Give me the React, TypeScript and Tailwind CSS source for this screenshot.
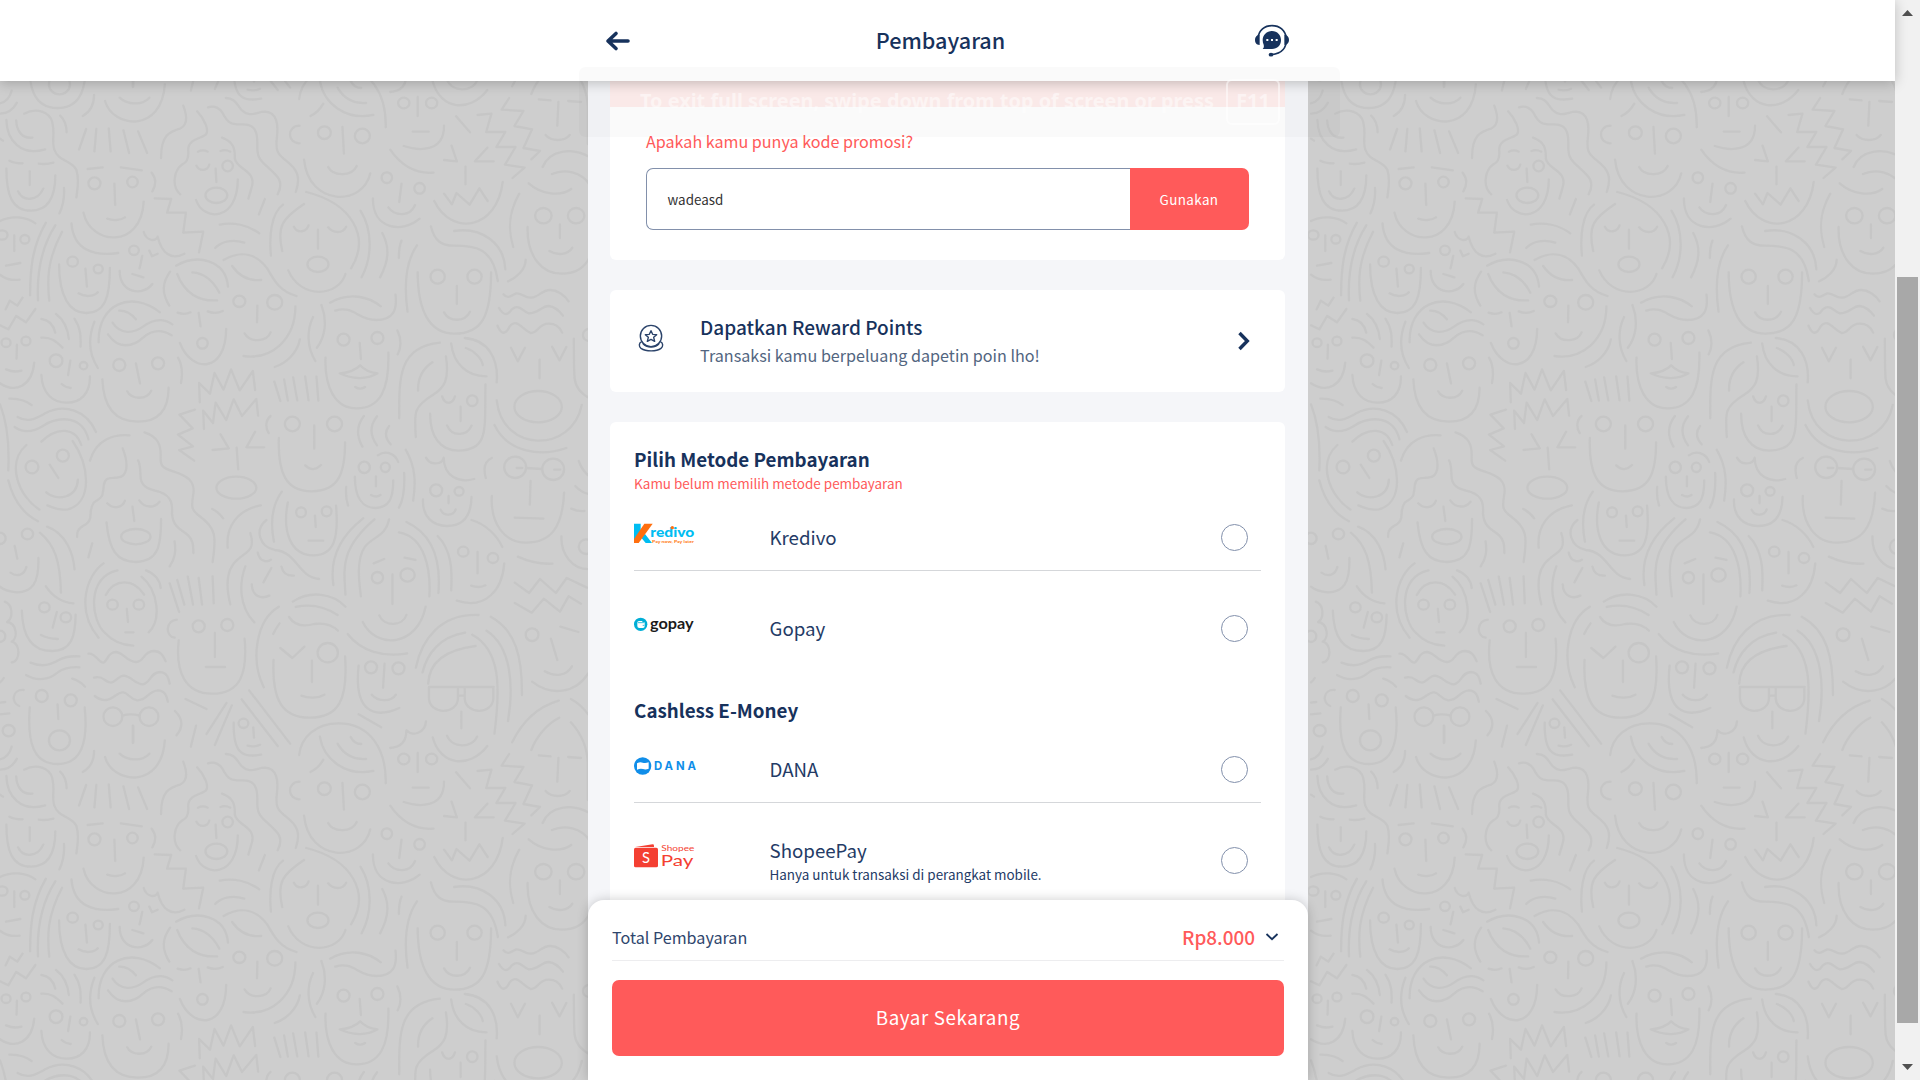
import type { ReactNode } from 'react';

type Oval = [number, number, number, number];

// Face doodles of the wallpaper tile, upper part.
const UPPER_OVALS: Oval[] = [
  [251, 340, 16, 18], [352, 336, 14, 16], [605, 288, 14, 16], [575, 376, 29, 23], [862, 188, 17, 19], [963, 198, 20, 22],
  [1073, 99, 15, 16], [1147, 99, 15, 16], [1028, 323, 14, 16], [1115, 355, 14, 16], [1444, 437, 22, 23], [1531, 437, 22, 23],
  [6, 495, 14, 14], [66, 508, 12, 13], [193, 575, 14, 15], [261, 597, 12, 13], [356, 541, 13, 14], [845, 583, 28, 23],
  [1163, 620, 19, 21], [1261, 620, 19, 21], [1430, 1010, 63, 47], [1565, 795, 16, 18], [16, 818, 12, 13], [69, 813, 12, 13],
  [149, 872, 17, 19], [222, 887, 10, 11], [317, 885, 16, 18], [420, 880, 16, 18], [538, 820, 14, 16], [636, 694, 16, 17],
  [730, 697, 20, 22], [913, 809, 16, 18], [1003, 804, 16, 18], [628, 1253, 53, 33], [777, 1062, 20, 22], [889, 1062, 20, 22],
  [1255, 992, 14, 16], [968, 1192, 15, 17], [1024, 1192, 12, 14], [1159, 1261, 16, 18], [1220, 1264, 12, 13],
  [1369, 1192, 29, 32], [1470, 1198, 29, 32], [1558, 1430, 20, 22], [85, 1191, 17, 19], [167, 1157, 16, 18],
  [361, 1400, 39, 23], [0, 1405, 15, 17], [73, 1392, 15, 16], [800, 1327, 13, 15], [868, 1324, 13, 15],
  [1003, 1523, 15, 17], [1083, 1515, 19, 20], [1231, 1445, 14, 15], [1310, 1464, 14, 15],
];

const UPPER_STROKES = [
  'M0 131C20 131 36 117 45 98M0 100C15 95 27 80 31 62M64 131C90 115 120 120 135 145C150 180 135 215 145 240C155 275 190 270 203 300C212 330 205 360 203 382',
  'M17 150C18 210 55 260 120 238M43 151C44 185 60 206 86 203M160 137C172 150 177 165 177 187M250 75C250 105 240 125 220 138M25 272C35 278 45 280 60 280M103 281C118 283 130 282 142 278M0 206L8 212',
  'M17 296C17 370 30 422 82 422C130 422 147 380 147 316M79 304V345M48 364C60 395 100 395 115 356M170 354C172 385 167 408 158 430',
  'M229 177L210 239M256 177L251 244M289 175L294 244M328 181L343 249M367 184L391 249M279 93C300 175 430 190 438 43M318 83C340 107 380 105 397 83M354 0V50',
  'M233 297L273 292M321 292L377 301M304 341L306 405M285 446C300 452 320 452 332 442M222 428C240 525 375 540 382 395M403 308C415 325 415 345 405 364',
  'M487 107C500 145 497 165 480 175C450 185 428 195 428 264M524 124C545 150 555 180 548 192C540 205 500 205 500 240C502 260 500 275 485 283C462 300 455 350 479 373',
  'M553 112C570 105 585 115 592 130C605 160 615 165 645 163C675 163 684 180 684 220C682 260 690 270 710 290C740 320 755 335 738 373',
  'M600 84C625 84 630 105 642 120C665 145 680 125 705 125C735 128 740 160 736 200C732 240 735 250 760 272C790 298 800 320 786 366',
  'M590 203C620 215 625 235 624 265C628 300 685 300 668 355L660 386M526 245C535 240 545 241 552 245M586 243C595 239 605 241 612 245M522 287C530 305 552 303 556 284M573 296L575 336M521 390C540 455 632 455 632 328M704 387L688 433',
  'M411 385L455 387L444 428H494L487 488L540 485L529 547M859 101C850 120 840 130 825 138M796 167C762 167 762 220 796 220M910 171L914 251M872 291C885 320 935 320 948 288M808 269C820 410 965 410 984 310',
  'M1110 81V138M1097 185H1139M1073 228C1110 242 1180 250 1180 167M1037 239C1065 285 1100 312 1152 308M1212 139L1249 187M1067 341L1061 396M1032 412C1050 440 1090 440 1103 405M991 385C990 480 1070 490 1115 446',
  'M1200 227L1214 274L1180 270M1295 233L1262 274H1312M1237 290V343M1180 371L1201 403L1213 369L1248 404L1274 355L1296 393M1154 393C1200 500 1320 480 1336 336',
  'M1269 135L1306 131L1292 186H1343L1319 231H1370L1342 284L1394 293L1362 324M1353 84L1333 119L1391 123L1367 168L1414 178L1391 234L1435 243L1412 268',
  'M1432 88L1463 91M1510 93L1544 96M1484 96L1481 167M1450 195C1465 215 1500 215 1514 195M1442 291C1460 240 1520 230 1568 262M1467 312C1500 295 1545 305 1568 345M1405 340C1440 375 1490 380 1518 357M1380 371C1350 430 1350 480 1364 531',
  'M1488 463V504M1460 543C1480 557 1510 555 1521 533M1402 471C1400 560 1440 611 1493 611C1530 611 1555 590 1568 560M1397 569C1397 600 1370 625 1350 634',
  'M0 453C30 435 70 440 94 460M38 496V543M16 587L54 579M0 614C15 628 30 632 52 629M122 458C85 530 80 600 80 676M147 466C105 540 98 620 101 691M165 485C125 570 125 630 131 692M190 460C195 540 250 560 314 549',
  'M227 596L231 650M209 670C225 682 250 680 260 667M157 583C157 680 185 730 230 729C280 728 292 680 292 594M382 486C390 515 415 515 419 500C430 550 455 572 490 551M397 542L404 559L419 551M378 558L371 595M352 612L381 622M318 603C318 670 380 680 405 642',
  'M468 587C525 550 600 570 606 650M471 612C490 670 530 695 577 691M511 607C550 610 570 640 583 668M452 605C430 640 430 670 450 707M584 464C620 455 660 465 689 490M572 534C590 512 620 508 649 518M594 570C640 540 680 550 710 595C730 635 745 665 788 678M617 588C635 618 660 633 694 630',
  'M752 404C720 430 715 500 720 557M808 402C750 445 735 470 750 543M814 366C935 400 985 500 933 595M781 470C790 490 815 488 820 466M872 472C885 490 910 492 920 470M845 479V536M766 601C800 690 900 680 918 612M958 422C990 480 990 560 961 622M1016 489C1035 530 1035 570 1010 622M1067 512C1060 530 1060 545 1060 564',
  'M1108 526C1075 580 1075 660 1083 725M1145 469C1155 515 1175 527 1205 527C1260 527 1310 530 1323 633M1207 483C1280 470 1340 520 1343 598M1214 648V702M1180 727C1195 757 1235 757 1249 725M1110 607C1110 720 1140 791 1208 791C1280 791 1305 740 1305 607',
  'M1338 673C1350 690 1360 675 1372 670C1385 668 1395 685 1412 683C1430 682 1440 660 1462 660C1480 660 1500 675 1511 694M1326 714C1340 740 1350 735 1360 718C1380 700 1390 725 1405 730C1430 730 1440 708 1458 708C1475 710 1488 725 1496 737M1322 767C1335 800 1345 790 1355 768C1375 745 1385 775 1410 789C1430 790 1430 761 1458 761C1475 761 1488 772 1494 788',
  'M1358 833L1376 874L1395 833M1467 830L1487 871L1505 831M1434 869V925M1320 991C1335 1150 1520 1150 1546 1005M1314 1065C1350 1150 1440 1160 1505 1134M1525 806C1525 850 1525 900 1527 925C1530 955 1550 975 1568 985',
  'M60 683L46 707L26 692L15 718M94 717L69 757L43 738L22 778L0 766M45 824L44 866M16 898C30 905 45 906 57 902M0 940C40 970 85 950 91 878M110 747C130 750 142 765 147 788M149 732C170 750 180 775 183 807M198 746C215 775 215 800 214 830M110 803C135 800 150 815 166 833',
  'M187 872L181 915M164 942C172 950 180 953 188 954M110 915C112 970 140 998 178 998C215 998 240 970 239 919M251 755C235 800 235 850 260 894M262 817C260 700 350 660 425 727M317 722C340 722 352 735 361 748M299 758C320 795 355 790 380 770C410 745 435 745 458 763M287 793C315 840 355 830 380 803C405 778 430 778 456 796',
  'M361 880L372 940M338 964C350 990 390 990 402 962M272 928C275 1020 310 1055 366 1055C430 1055 448 1010 448 953M473 863C487 890 485 915 481 939M472 728C485 733 495 733 506 727M552 724C565 730 580 730 592 723M528 729L533 769M478 819C510 910 600 910 601 777',
  'M684 707L683 757M650 790C665 820 710 815 719 787M785 709C785 810 720 870 647 858M797 808C790 850 760 880 730 891M854 705C870 750 865 800 842 833M832 741C815 780 815 830 838 873M877 698C930 665 980 680 1012 709M891 722C940 705 950 750 1000 750C1045 750 1056 720 1051 674',
  'M956 819L959 867M903 910C925 908 945 900 957 886C968 900 985 908 1003 910C975 930 935 928 903 910ZM944 951C952 957 962 957 970 951M865 863C862 950 890 1015 947 1015C1010 1015 1035 960 1032 848M1056 781C1068 810 1065 835 1057 853',
  'M729 935L745 993M755 928L765 992M779 922L790 991M811 919L820 991M841 920L846 992M531 997L529 939L558 971L570 909L594 959L614 898L637 961L672 903L678 960M542 1077L540 1022L566 1059L573 998L601 1050L621 988L643 1038L681 987L686 1037M518 1019L477 1034L512 1075L473 1094L513 1129L476 1140L516 1172',
  'M586 1093L608 1135L565 1140M678 1085L655 1132H702M629 1133L633 1198M835 1066V1136M811 1186C825 1202 840 1200 853 1185M719 1038C705 1050 705 1075 714 1089M741 1104C738 1210 760 1264 828 1264C900 1264 917 1210 917 1117M967 1038C945 1070 948 1100 963 1130M1002 1039C980 1070 985 1100 1002 1126M1034 1068C1022 1085 1024 1105 1038 1123',
  'M1169 818C1060 830 1060 920 1061 1045M1149 877C1125 895 1110 925 1111 962M1185 859C1195 930 1180 955 1150 975C1100 1010 1100 1025 1105 1101M1199 820C1205 880 1240 920 1293 919M1238 834C1260 842 1280 865 1283 885M1235 804C1300 810 1325 870 1320 937M1175 979C1182 1005 1202 1005 1209 979M1224 1010V1053M1188 1066C1200 1100 1240 1100 1253 1067M1143 1031C1143 1100 1170 1142 1218 1142C1300 1140 1288 1080 1290 943',
  'M1004 1156C1025 1140 1050 1150 1058 1176M999 1219V1249M986 1275C995 1281 1005 1280 1011 1275M943 1220C943 1285 965 1314 998 1314C1035 1312 1045 1285 1045 1231M1078 1139C1105 1190 1105 1240 1098 1292M1074 1209C1076 1255 1072 1290 1060 1313M920 1251C918 1275 920 1290 925 1307M1132 1163C1145 1190 1175 1182 1179 1163C1180 1220 1220 1240 1260 1227M1307 1164C1285 1175 1285 1200 1291 1224',
  'M1192 1278V1300M1171 1319C1180 1340 1205 1338 1211 1318M1124 1288C1122 1340 1150 1368 1188 1368C1230 1368 1252 1340 1253 1281M1373 1194H1388M1398 1194L1440 1197M1473 1199L1489 1199M1410 1233L1408 1304M1368 1343L1444 1346M1307 1278C1303 1360 1340 1418 1398 1418C1465 1418 1495 1370 1499 1268M1253 1350C1290 1362 1320 1395 1335 1431M1376 1460C1405 1475 1435 1483 1468 1481',
  'M1538 1173C1545 1195 1555 1210 1568 1220M1529 1248C1540 1262 1552 1270 1568 1273M1518 1316C1530 1322 1540 1324 1553 1323M1492 1399C1490 1450 1520 1500 1568 1497M25 986C50 985 70 993 84 1005M47 1041C75 1060 95 1045 120 1030C170 1000 230 1020 255 1086M39 1071C65 1092 90 1085 115 1067C160 1035 220 1040 235 1108M110 1115C150 1070 200 1070 216 1125',
  'M0 1003C20 1060 25 1130 22 1201M22 1231C35 1290 60 1330 101 1354M70 1125C15 1180 50 1280 105 1319M193 1113C240 1190 245 1300 180 1318C160 1322 145 1315 126 1306M132 1184L155 1224M123 1267C150 1295 205 1285 207 1229M239 1172C255 1110 300 1092 344 1096M326 1135C345 1190 335 1220 315 1222C295 1226 280 1218 276 1245C272 1290 270 1280 250 1297C230 1325 255 1350 220 1368C205 1380 205 1385 205 1401',
  'M384 1087C420 1100 428 1125 427 1160C425 1190 435 1195 460 1204C500 1218 518 1235 514 1270C508 1310 508 1320 530 1338C575 1375 575 1400 565 1476M367 1171C375 1190 372 1210 374 1225C378 1255 400 1258 425 1266C460 1280 458 1310 457 1330C460 1375 485 1380 500 1396C515 1412 513 1430 514 1449',
  'M285 1300C300 1318 325 1315 332 1292M370 1291C385 1315 410 1315 424 1295M352 1310L357 1353M283 1357C290 1440 310 1476 362 1476C420 1474 428 1430 428 1347M464 1414C468 1445 465 1465 451 1489M245 1420L235 1462M39 1428L46 1466M28 1508C45 1522 65 1515 70 1491M102 1464C104 1540 85 1567 45 1567C25 1565 10 1560 0 1550M125 1370C175 1390 195 1450 198 1498M106 1388C145 1425 160 1470 162 1568',
  'M564 1317C575 1323 585 1333 593 1345M693 1306C630 1320 600 1370 605 1433M749 1265C720 1310 720 1370 728 1415M765 1297C750 1380 770 1456 833 1456C890 1456 900 1400 893 1307M837 1337L839 1371M820 1412H859M708 1350C675 1380 690 1430 730 1440C790 1445 790 1520 848 1527M665 1389C680 1440 655 1445 635 1465C605 1490 598 1540 612 1603M685 1448C690 1475 710 1478 720 1469M748 1490C752 1510 765 1518 781 1517M652 1489C635 1540 635 1610 676 1657M721 1494L700 1537',
  'M965 1345C880 1420 880 1500 886 1545M995 1348C900 1440 915 1500 918 1574M1034 1348C1025 1400 990 1400 970 1430C945 1470 955 1540 959 1579M1080 1356C1165 1400 1170 1500 1165 1569M1060 1387C1130 1400 1145 1500 1141 1579M1163 1398C1200 1440 1202 1500 1199 1561M993 1480L1021 1467M1075 1463L1104 1470M1043 1513V1602M1269 1446V1510M1340 1480C1335 1560 1290 1620 1214 1592M1252 1547C1265 1552 1280 1552 1290 1546',
  'M275 1480C230 1515 200 1620 262 1703M312 1501C230 1520 240 1650 280 1690C300 1715 330 1726 354 1727M388 1501C410 1510 425 1530 427 1554M376 1520C420 1560 430 1650 395 1687',
].join('');

// Lower part of the tile, drawn 1500 units further down.
const LOWER_OVALS: Oval[] = [
  [299, 104, 14, 15], [369, 104, 14, 15], [0, 199, 14, 17], [118, 112, 14, 15], [175, 142, 14, 15], [23, 482, 16, 17],
  [111, 378, 16, 18], [188, 391, 16, 18], [158, 511, 28, 30], [300, 440, 25, 28], [396, 440, 25, 28], [647, 460, 13, 14],
  [528, 169, 16, 18], [604, 165, 16, 18], [871, 248, 27, 29], [986, 292, 16, 18], [1059, 295, 16, 18], [1414, 194, 17, 19],
];

const LOWER_STROKES = [
  'M281 75C305 25 355 25 383 74M337 117L340 156M333 187H355M451 40L476 126M471 30L490 104M499 20L513 104M528 24L537 104M565 19L568 100M669 43C670 80 695 88 716 77M122 49C140 80 165 97 195 100',
  'M13 95C35 105 35 145 19 156C45 160 48 205 31 215C55 220 55 275 31 277M151 126L140 173M109 195C120 202 135 206 154 207M58 122C60 200 85 243 138 243C190 243 200 200 201 134M81 278C110 292 135 285 155 271C170 260 190 258 211 259M69 315C100 335 130 328 150 310C170 293 190 290 211 292M192 326C205 330 218 340 226 350',
  'M0 337C5 333 8 328 10 324M0 398L14 396M0 433L25 430M63 360C30 358 30 400 51 408M153 403L155 447M79 412C72 520 90 582 153 582C215 582 235 520 225 412',
  'M235 251C255 248 262 280 275 278C288 270 285 248 308 246C330 248 335 275 362 276C385 275 380 244 408 243C430 243 435 262 440 274M250 323C275 315 278 338 295 338C308 335 315 317 330 317C350 320 360 343 380 343C402 338 398 308 425 306C445 308 448 325 451 341M252 378C275 398 290 390 305 378C340 350 335 385 365 391C390 392 395 362 420 361C440 362 443 380 446 395',
  'M325 437C340 432 355 432 371 437M353 467V519M465 423C485 445 488 470 469 496M493 387L549 417M521 467L507 530M602 399L549 492M616 406L571 525M642 388L738 528M662 361L771 521M673 472L675 503M658 527C670 531 682 529 691 524M621 458C620 545 640 565 694 554',
  'M475 211C465 310 495 371 563 371C640 371 658 310 650 206M470 149C440 152 438 198 464 203M571 189V261M547 291H598M741 110C680 150 665 270 701 352M743 160C735 172 730 182 726 192M778 95C825 60 885 70 918 110M786 111C830 100 870 115 897 135M768 141C785 170 810 170 835 162C860 158 880 162 898 182',
  'M745 234L777 264L809 230M829 272V336M801 377C820 386 845 385 862 374M727 270C722 390 750 443 823 443C900 443 925 390 917 259M1008 136C1020 170 1070 170 1080 135M964 156C1000 240 1110 230 1131 110M924 192C960 245 1020 262 1082 250M1022 281L1018 353M988 374C1005 396 1040 396 1052 374M953 287C940 420 990 450 1061 414M953 433L1013 472',
  'M1272 135C1170 130 1120 210 1105 293M1236 188C1170 200 1135 250 1123 307M1264 228C1180 240 1140 280 1138 341M1255 194C1330 240 1330 350 1314 491M1293 182C1360 230 1365 350 1350 453M1304 140C1370 180 1388 260 1387 375M1140 351H1312M1140 351V385C1142 435 1216 435 1217 385V351M1235 351V385C1237 435 1310 435 1311 385V351M1217 377H1235M1226 425V475M1188 497C1200 535 1255 535 1268 500M1150 502C1170 590 1250 595 1295 528M1132 454C1130 490 1095 500 1080 481C1080 510 1070 532 1037 534',
  'M1368 38L1406 69L1435 27L1477 69L1506 24L1560 53M1368 99L1413 128L1445 86L1488 125L1511 79L1544 101M1489 170L1537 186M1464 206L1481 270M1448 304C1475 322 1505 318 1520 289M1414 335C1465 380 1530 370 1563 310M1485 392C1430 410 1390 450 1361 517M1486 443C1455 460 1425 500 1412 540M1517 387C1540 400 1555 420 1568 440M1517 457C1540 485 1560 520 1562 580V690',
  'M795 555C800 500 840 460 900 460C985 460 1027 540 1025 640M850 500C860 570 920 620 992 603M897 521C915 557 940 569 973 567M932 501C938 515 948 522 960 522',
].join('');

const Ovals = ({ items }: { items: Oval[] }) => (
  <>
    {items.map(([cx, cy, rx, ry]) => (
      <ellipse key={`${cx}-${cy}`} cx={cx} cy={cy} rx={rx} ry={ry} vectorEffect="non-scaling-stroke" />
    ))}
  </>
);

function Wallpaper() {
  return (
    <svg className="absolute inset-0" width="1895" height="1080" fill="none" stroke="#c6c6c6" strokeWidth="2.3" strokeLinecap="round" strokeLinejoin="round">
      <defs>
        <g id="faces">
          <g transform="translate(0 70) scale(0.3763 0.33333)">
            <path d={UPPER_STROKES} vectorEffect="non-scaling-stroke" />
            <Ovals items={UPPER_OVALS} />
            <g transform="translate(0 1500)">
              <path d={LOWER_STROKES} vectorEffect="non-scaling-stroke" />
              <Ovals items={LOWER_OVALS} />
            </g>
          </g>
        </g>
      </defs>
      {[0, 1311].map((x) => [-656, 0, 656].map((y) => <use key={`${x}${y}`} href="#faces" x={x} y={y} />))}
    </svg>
  );
}

const KredivoLogo = () => (
  <svg width="62" height="22" viewBox="42 40 186 66">
    <path d="M42 42H62V64L42 92ZM62 82L75 73L96 100H77Z" fill="#00bdf2" />
    <path d="M73 42H98L56 100H42V88Z" fill="#ff6f0f" />
    <text x="91" y="83" textLength="132" lengthAdjust="spacingAndGlyphs" fontFamily="Lato" fontWeight="900" fontSize="41" fill="#00bdf2">redivo</text>
    <circle cx="157" cy="54" r="5" fill="#ff6f0f" />
    <text x="96" y="100" textLength="126" lengthAdjust="spacingAndGlyphs" fontFamily="Lato" fontWeight="900" fontSize="12" fill="#ff8127">Pay now, Pay later</text>
  </svg>
);

const GopayLogo = () => (
  <svg width="62" height="26" viewBox="42 309 186 78">
    <circle cx="62" cy="346" r="20" fill="#00aed6" />
    <path d="M52 341Q52 336 57 336H67V339H71Q74 339 74 343V352Q74 357 69 357H58Q52 357 52 351Z" fill="#fff" />
    <path d="M54 341H72M68 349H73" stroke="#00aed6" strokeWidth="2.4" />
    <text x="90" y="359" textLength="131" lengthAdjust="spacingAndGlyphs" fontFamily="Lato" fontWeight="700" fontSize="44" fill="#1b1b1b">gopay</text>
  </svg>
);

const DanaLogo = () => (
  <svg width="62" height="18" viewBox="42 36 186 54">
    <circle cx="68" cy="63" r="26" fill="#108ee9" />
    <path d="M51 55Q60 50 68 53T86 52V71Q77 75 69 72T51 74Z" fill="#fff" />
    <text x="102" y="75" textLength="126" lengthAdjust="spacing" fontFamily="Inter" fontWeight="700" fontSize="34" fill="#108ee9">DANA</text>
  </svg>
);

const ShopeeLogo = () => (
  <svg width="62" height="28" viewBox="42 293 186 84">
    <path d="M46 305L98 297Q102 297 102 301V305Z" fill="#f43f32" />
    <rect x="42" y="307" width="72" height="59" rx="5" fill="#f43f32" />
    <text x="78" y="353" textAnchor="middle" fontFamily="Lato" fontWeight="400" fontSize="44" fill="#fff">S</text>
    <text x="124" y="317" textLength="99" lengthAdjust="spacingAndGlyphs" fontFamily="Lato" fontWeight="400" fontSize="25" fill="#f43f32">Shopee</text>
    <text x="122" y="362" textLength="98" lengthAdjust="spacingAndGlyphs" fontFamily="Lato" fontWeight="400" fontSize="48" fill="#f43f32">Pay</text>
  </svg>
);

function HeadsetIcon() {
  return (
    <svg width="36" height="34" viewBox="72 42 108 102" fill="none" stroke="#17325c">
      <path d="M84 84C86 60 104 47 126 47C149 47 166 61 169 84C171 112 156 131 125 134" strokeWidth="5" />
      <path d="M89 74V105C78 104 75 97 75 89C75 81 79 75 89 74ZM163 74V105C173 104 177 97 177 89C177 81 173 75 163 74Z" fill="#17325c" stroke="none" />
      <path d="M126 63C142 63 153 75 153 90C153 106 142 117 126 117H98C102 113 102 109 101 104C99 100 98 95 98 90C98 75 110 63 126 63Z" fill="#17325c" stroke="none" />
      <ellipse cx="123" cy="134" rx="7" ry="5.5" fill="#17325c" stroke="none" />
      <path d="M109 90H115M123 90H129M137 90H143" stroke="#fff" strokeWidth="6" />
    </svg>
  );
}

function RewardIcon() {
  return (
    <svg width="26" height="28" viewBox="115 70 78 84" fill="none" stroke="#2b436a" strokeWidth="4.2" strokeLinejoin="round">
      <circle cx="154" cy="106" r="32" />
      <path d="M154 90L159 101L171 102L162 110L165 122L154 116L143 122L146 110L137 102L149 101Z" />
      <path d="M126 123C117 127 117 138 124 143C139 153 170 153 184 143C191 138 191 127 182 123M129 128C141 143 168 143 179 128" />
    </svg>
  );
}

interface MethodProps {
  logo: ReactNode;
  name: string;
  note?: string;
  divider?: boolean;
}

function Method({ logo, name, note, divider }: MethodProps) {
  return (
    <div className={divider ? 'box-content flex h-[65px] items-center border-b border-[#d5d7da]' : 'flex h-[65px] items-center'}>
      <div className="mb-[7px] w-[136px]">{logo}</div>
      <div className={note ? 'flex-1' : 'flex-1 pb-[2px]'}>
        <div className="text-[18.7px] leading-[26px] text-[#243b66]">{name}</div>
        {note && <div className="text-[13.45px] leading-[22px] text-[#243b66]">{note}</div>}
      </div>
      <div className="mr-[13px] size-[27px] rounded-full border-[1.5px] border-[#8290ab]" />
    </div>
  );
}

export default function App() {
  return (
    <div className="relative flex h-[1080px] w-[1920px] overflow-hidden bg-[#cecece] font-['Noto_Sans_CJK_JP',sans-serif] text-[#17325c]">
      <Wallpaper />

      <div className="relative flex w-[1895px] flex-col">
        <header className="relative z-10 flex h-[81px] shrink-0 justify-center bg-white shadow-[0_2px_12px_rgba(0,0,0,0.22)]">
          <div className="flex w-[720px] items-center justify-between pr-[18px] pl-[17px]">
            <svg width="26" height="22" viewBox="0 0 26 22" fill="none" stroke="#17325c" strokeWidth="3.6" strokeLinecap="round" strokeLinejoin="round">
              <path d="M11 3.5L3 11L11 18.5M3.5 11H23" />
            </svg>
            <h1 className="pr-[3px] pb-[2px] text-[21.6px] font-medium leading-8">Pembayaran</h1>
            <HeadsetIcon />
          </div>
        </header>

        <main className="mx-auto flex min-h-0 w-[720px] flex-1 flex-col overflow-hidden bg-[#f5f6f9] pr-[23px] pl-[22px]">
          <section className="h-[179px] shrink-0 rounded-b-md bg-white">
            <div className="h-[26px] bg-[#ffeeed]" />
            <div className="px-9 pt-[22px]">
              <p className="pl-[0.5px] text-[16.12px] leading-6 text-[#ff5a5a]">Apakah kamu punya kode promosi?</p>
              <div className="mt-[15px] flex h-[62px]">
                <div className="flex w-[484px] items-center rounded-l-[7px] border border-r-0 border-[#8290ab] pl-[21px] text-[13.4px] text-[#333]">wadeasd</div>
                <button className="w-[119px] rounded-r-[7px] bg-[#ff5a5a] text-[13.4px] tracking-[0.4px] text-white">Gunakan</button>
              </div>
            </div>
          </section>

          <section className="mt-[30px] flex h-[102px] shrink-0 items-center rounded-md bg-white pr-[35px] pl-7">
            <div className="mb-[7px] w-[62.6px]"><RewardIcon /></div>
            <div className="flex-1">
              <div className="text-[19px] font-medium leading-7">Dapatkan Reward Points</div>
              <div className="text-[16.14px] leading-7 text-[#526580]">Transaksi kamu berpeluang dapetin poin lho!</div>
            </div>
            <svg width="13" height="20" viewBox="0 0 13 20" fill="none" stroke="#17325c" strokeWidth="3.4">
              <path d="M2.5 2L10.3 10L2.5 18" />
            </svg>
          </section>

          <section className="mt-[30px] h-[700px] shrink-0 rounded-md bg-white px-6 pt-6">
            <h2 className="pl-[0.6px] text-[18.8px] font-bold leading-[26px]">Pilih Metode Pembayaran</h2>
            <p className="mb-[11px] pt-px pl-[0.6px] text-[13.47px] leading-[21px] text-[#ff5a5a]">Kamu belum memilih metode pembayaran</p>
            <Method logo={<KredivoLogo />} name="Kredivo" divider />
            <div className="mt-[25px]"><Method logo={<GopayLogo />} name="Gopay" /></div>
            <h2 className="mt-9 mb-[14px] pl-[0.6px] text-[18.75px] font-bold leading-[26px]">Cashless E-Money</h2>
            <Method logo={<DanaLogo />} name="DANA" divider />
            <div className="mt-[25px]"><Method logo={<ShopeeLogo />} name="ShopeePay" note="Hanya untuk transaksi di perangkat mobile." /></div>
          </section>
        </main>

        <footer className="absolute bottom-0 left-[588px] h-[180px] w-[720px] rounded-t-2xl bg-white px-6 pt-[14px] shadow-[0_0_12px_rgba(0,0,0,0.2)]">
          <div className="box-content flex h-[46px] items-center border-b border-[#ededef] pr-[5px]">
            <span className="flex-1 text-[16.15px] text-[#2f466d]">Total Pembayaran</span>
            <span className="text-[18.9px] font-medium text-[#ff5a5a]">Rp8.000</span>
            <svg className="ml-[10px]" width="14" height="10" viewBox="0 0 14 10" fill="none" stroke="#17325c" strokeWidth="1.8">
              <path d="M1.5 2L7 7.2L12.5 2" />
            </svg>
          </div>
          <button className="mt-[19px] h-[76px] w-full rounded-[7px] bg-[#ff5a5a] pb-[2px] text-[18.8px] tracking-[0.6px] text-white">Bayar Sekarang</button>
        </footer>

        <div className="absolute top-[67px] left-[579px] z-20 flex h-[70px] w-[761px] items-center rounded-md bg-black/[0.02] pb-[2px] pl-[61px] font-['Noto_Sans',sans-serif] text-[19.9px] font-bold text-white/50">
          <span className="w-[586px] whitespace-nowrap">To exit full screen, swipe down from top of screen or press</span>
          <span className="mt-[2px] flex h-[46px] w-[54px] items-center justify-center rounded-md border-2 border-white/50 pb-[2px]">F11</span>
        </div>
      </div>

      <div className="relative flex w-[25px] flex-col items-center justify-between bg-[#f1f1f1] py-[10px]">
        <svg width="11" height="6" viewBox="0 0 11 6"><path d="M0 6L5.5 0L11 6Z" fill="#505050" /></svg>
        <div className="mt-[220px] h-[746px] w-[21px] bg-[#a8a8a8]" />
        <svg width="11" height="6" viewBox="0 0 11 6"><path d="M0 0L5.5 6L11 0Z" fill="#505050" /></svg>
      </div>
    </div>
  );
}
